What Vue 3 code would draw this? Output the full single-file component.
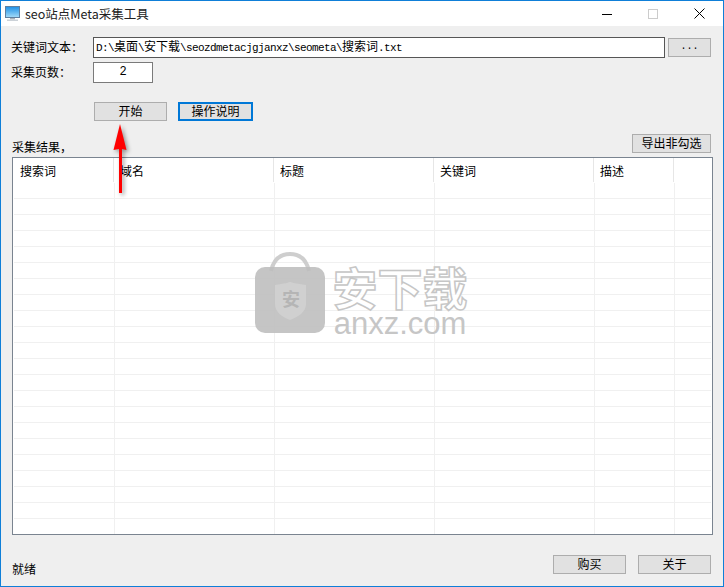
<template>
  <div class="window">
    <div class="titlebar">
      <svg class="app-icon" width="15" height="16" viewBox="0 0 15 16">
        <defs>
          <linearGradient id="screen" x1="0" y1="0" x2="0" y2="1">
            <stop offset="0" stop-color="#1c8fe6" />
            <stop offset="1" stop-color="#a5dcf8" />
          </linearGradient>
        </defs>
        <rect x="0.5" y="0.5" width="14" height="11" fill="url(#screen)" stroke="#5f7f9f" />
        <rect x="5" y="12" width="5" height="1.5" fill="#a9b2ba" />
        <rect x="2" y="13.5" width="11" height="1.5" fill="#ccd2d8" />
      </svg>
      <span class="title">seo站点Meta采集工具</span>
      <div class="controls">
        <svg width="10" height="10" viewBox="0 0 10 10"><path d="M0 5.5H10" stroke="#000" /></svg>
        <svg width="10" height="10" viewBox="0 0 10 10"><rect x="0.5" y="0.5" width="9" height="9" fill="none" stroke="#ccc" /></svg>
        <svg width="11" height="11" viewBox="0 0 11 11"><path d="M0.5 0.5L10.5 10.5M10.5 0.5L0.5 10.5" stroke="#000" fill="none" /></svg>
      </div>
    </div>

    <div class="main">
      <div class="form-row first">
        <label class="label">关键词文本：</label>
        <div class="input path">
          <span v-for="(part, index) in pathParts" :key="index" :class="{ latin: part.latin }">{{ part.text }}</span>
        </div>
        <button class="btn browse">...</button>
      </div>
      <div class="form-row second">
        <label class="label">采集页数：</label>
        <div class="input pages">2</div>
      </div>
      <div class="actions">
        <button class="btn start">开始</button>
        <button class="btn help">操作说明</button>
      </div>
      <div class="result-head">
        <span class="result-label">采集结果，</span>
        <button class="btn export">导出非勾选</button>
      </div>

      <div class="table">
        <div class="thead">
          <div v-for="col in columns" :key="col" class="th">{{ col }}</div>
        </div>
        <div class="first-row-gap tr">
          <div v-for="n in 6" :key="n" class="td"></div>
        </div>
        <div v-for="r in 21" :key="r" class="tr" :class="{ last: r === 21 }">
          <div v-for="n in 6" :key="n" class="td"></div>
        </div>
      </div>

      <div class="footer">
        <span class="status">就绪</span>
        <div class="footer-btns">
          <button class="btn foot">购买</button>
          <button class="btn foot">关于</button>
        </div>
      </div>
    </div>

    <!-- watermark lies over the table -->
    <div class="watermark">
      <svg class="wm-bag" width="72" height="82" viewBox="0 0 72 82">
        <path d="M17 20C20 7 28 3 36 3C44 3 52 7 55 20" fill="none" stroke="#c9c9c9" stroke-width="4" opacity="0.9" />
        <rect x="1" y="16" width="70" height="66" rx="10" fill="#bdbdbd" fill-opacity="0.88" />
        <path d="M21 34C30 33 36 31 36 31C36 31 43 33 52 34V53C52 61 44 66 36 69C28 66 21 61 21 53Z" fill="#d0d0d0" />
      </svg>
      <span class="wm-shield-text">安</span>
      <div class="wm-words">
        <div class="wm-cn">安下载</div>
        <div class="wm-en">anxz.com</div>
      </div>
    </div>

    <!-- red arrow annotation -->
    <svg class="arrow" width="30" height="82" viewBox="0 0 30 82">
      <path d="M15 2L21.500 28L17 27L17 71L14 71L14 27L8.500 28Z" fill="#f00" />
    </svg>
  </div>
</template>

<script setup>
const pathParts = [
  { text: 'D:\\', latin: true },
  { text: '桌面' },
  { text: '\\', latin: true },
  { text: '安下载' },
  { text: '\\seozdmetacjgjanxz\\seometa\\', latin: true },
  { text: '搜索词' },
  { text: '.txt', latin: true }
]

const columns = ['搜索词', '域名', '标题', '关键词', '描述', '']
</script>

<style>
html,
body {
  margin: 0;
  background: #efefef;
}
</style>

<style scoped>
.window {
  position: relative;
  box-sizing: border-box;
  width: 724px;
  height: 587px;
  border: 1px solid #0f7fd8;
  background: #efefef;
  font-family: "Noto Sans CJK SC", "Liberation Sans", sans-serif;
  font-size: 12px;
  color: #000;
  overflow: hidden;
}

.titlebar {
  display: flex;
  align-items: center;
  height: 25px;
  background: #fff;
  padding-left: 4px;
}

.app-icon {
  margin-right: 5px;
}

.title {
  font-size: 12.5px;
  color: #222;
}

.controls {
  display: flex;
  align-items: center;
  margin-left: auto;
  padding-right: 18px;
  gap: 36px;
}

.main {
  padding: 0 12px 0 10px;
}

.form-row {
  display: flex;
  align-items: center;
  height: 21px;
}

.form-row.first {
  margin-top: 11px;
}

.form-row.second {
  margin-top: 4px;
}

.label {
  width: 82px;
  flex: none;
  line-height: 14px;
  margin-top: -2px;
}

.input {
  box-sizing: border-box;
  height: 21px;
  border: 1px solid #666;
  background: #fff;
  line-height: 16px;
}

.path {
  width: 572px;
  padding-left: 2px;
  white-space: nowrap;
  border-color: #565656;
}

.latin {
  font-family: "Liberation Mono", monospace;
  font-size: 11px;
  letter-spacing: -0.6px;
}

.pages {
  width: 60px;
  text-align: center;
  border-color: #7a7a7a;
  font-family: "Liberation Mono", monospace;
  line-height: 19px;
}

.btn {
  box-sizing: border-box;
  padding: 0 0 2px;
  height: 19px;
  border: 1px solid #adadad;
  background: #e1e1e1;
  font-family: inherit;
  font-size: 12px;
  line-height: 15px;
  color: #000;
}

.browse {
  width: 43px;
  margin-left: 3px;
  font-family: "Liberation Mono", monospace;
  font-size: 10px;
}

.actions {
  display: flex;
  margin: 19px 0 0 83px;
  gap: 11px;
}

.start {
  width: 73px;
}

.help {
  width: 75px;
  border: 2px solid #0078d7;
  line-height: 14px;
}

.result-head {
  display: flex;
  justify-content: space-between;
  align-items: flex-end;
  margin-top: 13px;
  height: 19px;
}

.result-label {
  line-height: 14px;
  margin-left: 1px;
  margin-bottom: -1px;
}

.export {
  width: 79px;
}

.table {
  box-sizing: border-box;
  width: 701px;
  height: 378px;
  margin: 4px 0 0 1px;
  border: 1px solid #7a8490;
  background: #fff;
  padding: 0 1px;
  overflow: hidden;
}

.thead,
.tr {
  display: grid;
  grid-template-columns: 100px 160px 160px 160px 80px 1fr;
}

.thead {
  height: 25px;
}

.th {
  box-sizing: border-box;
  padding-left: 6px;
  line-height: 26px;
  border-right: 1px solid #e6e6e6;
  height: 24px;
}

.th:last-child {
  border-right: 0;
}

.tr {
  height: 16px;
}

.first-row-gap {
  height: 16px;
}

.td {
  box-sizing: border-box;
  border-right: 1px solid #f0f0f0;
  border-bottom: 1px solid #f0f0f0;
  margin-right: -1px;
}

.td:last-child {
  border-right: 0;
  margin-right: 0;
}

.tr.last .td {
  border-bottom: 0;
}

.footer {
  display: flex;
  justify-content: space-between;
  align-items: flex-end;
  margin-top: 20px;
}

.status {
  margin-left: 1px;
  line-height: 14px;
  margin-bottom: -2px;
}

.footer-btns {
  display: flex;
  gap: 12px;
}

.foot {
  width: 73px;
}

.watermark {
  position: absolute;
  left: 253px;
  top: 250px;
  width: 216px;
  height: 84px;
}

.wm-bag {
  position: absolute;
  left: 0;
  top: 0;
}

.wm-shield-text {
  position: absolute;
  left: 28px;
  top: 35px;
  font-size: 18px;
  line-height: 24px;
  font-weight: 700;
  color: #b5b5b5;
}

.wm-words {
  position: absolute;
  left: 76px;
  top: 12px;
  width: 140px;
  text-align: center;
}

.wm-cn {
  font-size: 45px;
  line-height: 48px;
  font-weight: 700;
  color: rgba(255, 255, 255, 0.8);
  -webkit-text-stroke: 1.5px #c6c6c6;
  white-space: nowrap;
}

.wm-en {
  font-family: "Liberation Sans", sans-serif;
  font-size: 31px;
  line-height: 26px;
  color: #c6c6c6;
  white-space: nowrap;
}

.arrow {
  position: absolute;
  left: 104px;
  top: 121px;
  filter: drop-shadow(2px 2px 2px rgba(0, 0, 0, 0.4));
}
</style>
